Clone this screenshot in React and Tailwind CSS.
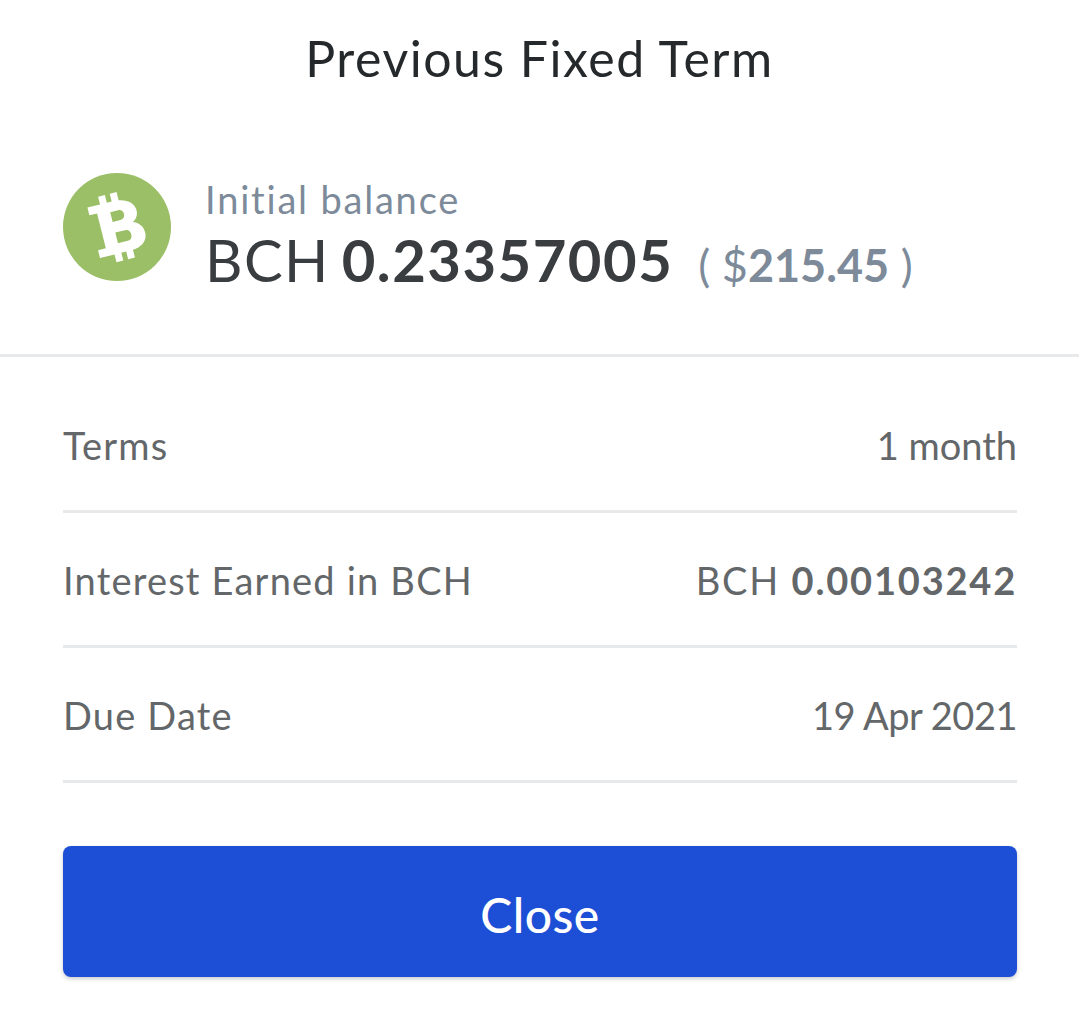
import React from 'react';

const font = 'font-["Lato","Noto_Sans",sans-serif]';

const BitcoinCashIcon = () => (
  <svg viewBox="0 0 108 108" className="w-[108px] h-[108px] shrink-0">
    <circle cx="54" cy="54" r="54" fill="#9bbf66" />
    <g transform="rotate(-14 54 54)" fill="#fff">
      <path
        fillRule="evenodd"
        d="M30 28H43V20H50V28H55V20H62V28.500C71 30 77 35 77 42.500C77 47.500 74.500 51 70.500 53C76.500 55 80 60 80 66C80 74 74 79.500 64 80V88H57V80H52V88H45V80H30V72H38V36H30ZM51 38V48H59C62 48 64 46 64 43C64 40 62 38 59 38ZM51 59V70H61C64.500 70 66 68 66 64.500C66 61 64.500 59 61 59Z"
      />
    </g>
  </svg>
);

const Row = ({ label, children }) => (
  <div className="flex items-center justify-between h-[135px] pt-[2px] border-b-[3px] border-[#e8e9ea] text-[38px] text-[#636769]">
    <span className="tracking-[1.2px]">{label}</span>
    <span>{children}</span>
  </div>
);

export default function App() {
  return (
    <div className={`w-[1079px] h-[1035px] bg-white overflow-hidden ${font}`}>
      <h1 className="h-[122px] pt-[28px] text-center text-[50px] leading-[60px] text-[#26292b] tracking-[1.5px]">
        Previous Fixed Term
      </h1>
      <div className="flex items-center gap-[34px] h-[235px] pb-[22px] px-[63px] border-b-[3px] border-[#e8e9ea]">
        <BitcoinCashIcon />
        <div className="pt-[24px]">
          <div className="text-[38px] leading-[46px] text-[#7d8a9a] tracking-[1.8px]">Initial balance</div>
          <div className="flex items-baseline text-[#3a3d40] text-[58px] leading-[76px]">
            <span className="tracking-[1.4px]">BCH</span>
            <span className="ml-[12px] font-bold tracking-[1.5px]">0.23357005</span>
            <span className="ml-[25px] text-[45px] text-[#7d8a9a]">
              ( $<span className="font-bold">215.45</span> )
            </span>
          </div>
        </div>
      </div>
      <div className="pl-[63px] pr-[62px] pt-[21px]">
        <Row label="Terms">1 month</Row>
        <Row label="Interest Earned in BCH">
          <span className="tracking-[1.8px]">BCH </span>
          <span className="font-bold tracking-[1.8px]">0.00103242</span>
        </Row>
        <Row label="Due Date">
          <span className="tracking-[-0.5px]">19 Apr 2021</span>
        </Row>
        <button className="block mt-[63px] w-full h-[131px] pt-[6px] rounded-[8px] bg-[#1d4ed6] text-white text-[48px] font-medium shadow-[0_2px_4px_rgba(0,0,0,0.2)] tracking-[0.5px]">
          Close
        </button>
      </div>
    </div>
  );
}
